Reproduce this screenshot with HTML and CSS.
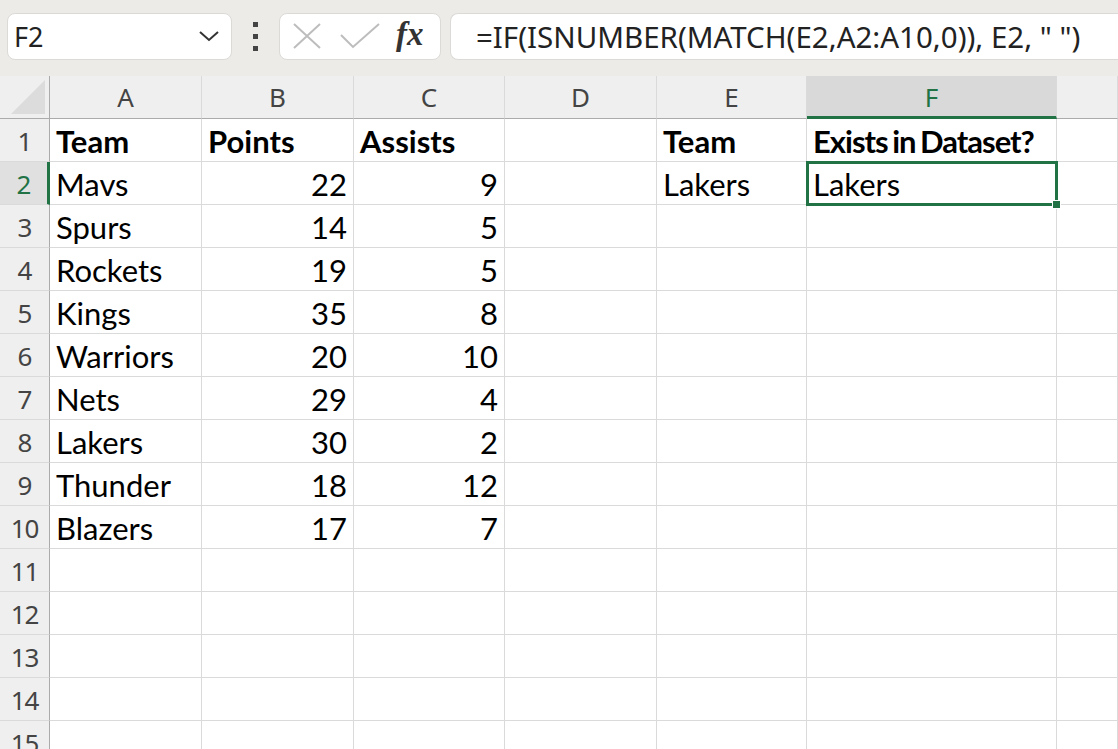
FILE: index.html
```html
<!DOCTYPE html>
<html lang="en">
<head>
    <meta charset="UTF-8">
    <title>Exists in Dataset</title>
    <link rel="stylesheet" href="styles.css">
</head>
<body>

<div class="toolbar">
    <div class="name-box">
        <span class="name-text">F2</span>
        <svg class="chevron" width="22" height="12" viewBox="0 0 22 12"><path d="M2 2 L11 10 L20 2" fill="none" stroke="#333" stroke-width="2"/></svg>
    </div>
    <div class="grip"><span></span><span></span><span></span></div>
    <div class="fx-box">
        <svg width="30" height="26" viewBox="0 0 30 26"><path d="M2 1 L28 25 M28 1 L2 25" stroke="#bdbdbd" stroke-width="2" fill="none"/></svg>
        <svg width="40" height="26" viewBox="0 0 40 26"><path d="M1 12 L13 24 L39 1" stroke="#bdbdbd" stroke-width="2" fill="none"/></svg>
        <span class="fx">fx</span>
    </div>
    <div class="formula-box">=IF(ISNUMBER(MATCH(E2,A2:A10,0)), E2, " ")</div>
</div>

<div class="sheet">
    <div class="corner"><div class="tri"></div></div>
    <div class="colhead">A</div>
    <div class="colhead">B</div>
    <div class="colhead">C</div>
    <div class="colhead">D</div>
    <div class="colhead">E</div>
    <div class="colhead active">F</div>
    <div class="colhead"></div>

    <div class="rowhead">1</div>
    <div class="cell bold">Team</div>
    <div class="cell bold">Points</div>
    <div class="cell bold">Assists</div>
    <div class="cell"></div>
    <div class="cell bold">Team</div>
    <div class="cell bold tight">Exists in Dataset?</div>
    <div class="cell"></div>

    <div class="rowhead active">2</div>
    <div class="cell">Mavs</div>
    <div class="cell num">22</div>
    <div class="cell num">9</div>
    <div class="cell"></div>
    <div class="cell">Lakers</div>
    <div class="cell selected">Lakers<span class="handle"></span></div>
    <div class="cell"></div>

    <div class="rowhead">3</div>
    <div class="cell">Spurs</div>
    <div class="cell num">14</div>
    <div class="cell num">5</div>
    <div class="cell"></div><div class="cell"></div><div class="cell"></div><div class="cell"></div>

    <div class="rowhead">4</div>
    <div class="cell">Rockets</div>
    <div class="cell num">19</div>
    <div class="cell num">5</div>
    <div class="cell"></div><div class="cell"></div><div class="cell"></div><div class="cell"></div>

    <div class="rowhead">5</div>
    <div class="cell">Kings</div>
    <div class="cell num">35</div>
    <div class="cell num">8</div>
    <div class="cell"></div><div class="cell"></div><div class="cell"></div><div class="cell"></div>

    <div class="rowhead">6</div>
    <div class="cell">Warriors</div>
    <div class="cell num">20</div>
    <div class="cell num">10</div>
    <div class="cell"></div><div class="cell"></div><div class="cell"></div><div class="cell"></div>

    <div class="rowhead">7</div>
    <div class="cell">Nets</div>
    <div class="cell num">29</div>
    <div class="cell num">4</div>
    <div class="cell"></div><div class="cell"></div><div class="cell"></div><div class="cell"></div>

    <div class="rowhead">8</div>
    <div class="cell">Lakers</div>
    <div class="cell num">30</div>
    <div class="cell num">2</div>
    <div class="cell"></div><div class="cell"></div><div class="cell"></div><div class="cell"></div>

    <div class="rowhead">9</div>
    <div class="cell">Thunder</div>
    <div class="cell num">18</div>
    <div class="cell num">12</div>
    <div class="cell"></div><div class="cell"></div><div class="cell"></div><div class="cell"></div>

    <div class="rowhead">10</div>
    <div class="cell">Blazers</div>
    <div class="cell num">17</div>
    <div class="cell num">7</div>
    <div class="cell"></div><div class="cell"></div><div class="cell"></div><div class="cell"></div>

    <div class="rowhead">11</div>
    <div class="cell"></div><div class="cell"></div><div class="cell"></div><div class="cell"></div><div class="cell"></div><div class="cell"></div><div class="cell"></div>
    <div class="rowhead">12</div>
    <div class="cell"></div><div class="cell"></div><div class="cell"></div><div class="cell"></div><div class="cell"></div><div class="cell"></div><div class="cell"></div>
    <div class="rowhead">13</div>
    <div class="cell"></div><div class="cell"></div><div class="cell"></div><div class="cell"></div><div class="cell"></div><div class="cell"></div><div class="cell"></div>
    <div class="rowhead">14</div>
    <div class="cell"></div><div class="cell"></div><div class="cell"></div><div class="cell"></div><div class="cell"></div><div class="cell"></div><div class="cell"></div>
    <div class="rowhead">15</div>
    <div class="cell"></div><div class="cell"></div><div class="cell"></div><div class="cell"></div><div class="cell"></div><div class="cell"></div><div class="cell"></div>
</div>

</body>
</html>
```

FILE: styles.css
```css
* {
    box-sizing: border-box;
}

body {
    margin: 0;
    width: 1118px;
    height: 749px;
    overflow: hidden;
    background-color: #fff;
    font-family: "Noto Sans", sans-serif;
}

.toolbar {
    height: 76px;
    background-color: #edebe8;
    display: flex;
    align-items: center;
    padding: 0 0 4px 7px;
}

.name-box {
    width: 225px;
    height: 47px;
    background-color: #fff;
    border: 1px solid #dcdad7;
    border-radius: 8px;
    display: flex;
    align-items: center;
    justify-content: space-between;
    padding: 0 11px 0 6px;
}

.name-text {
    font-size: 27px;
    color: #222;
}

.grip {
    width: 47px;
    display: flex;
    flex-direction: column;
    align-items: center;
    gap: 7px;
}

.grip span {
    width: 5px;
    height: 5px;
    background-color: #444;
}

.fx-box {
    width: 162px;
    height: 47px;
    background-color: #fff;
    border: 1px solid #dcdad7;
    border-radius: 8px;
    display: flex;
    align-items: center;
    gap: 18px;
    padding: 0 0 0 12px;
}

.fx {
    font-family: "Liberation Serif", serif;
    font-style: italic;
    font-weight: bold;
    font-size: 33px;
    color: #333;
    margin-left: -2px;
    margin-top: -4px;
}

.formula-box {
    flex: 1;
    height: 47px;
    margin-left: 9px;
    background-color: #fff;
    border: 1px solid #dcdad7;
    border-right: none;
    border-radius: 8px 0 0 8px;
    display: flex;
    align-items: center;
    padding-left: 25px;
    font-size: 29.5px;
    color: #222;
    white-space: nowrap;
}

.sheet {
    display: grid;
    grid-template-columns: 50px 152px 152px 151px 152px 150px 250px 1fr;
    grid-template-rows: 43px;
    grid-auto-rows: 43px;
}

.corner {
    background-color: #efefef;
    border-right: 1px solid #ababab;
    border-bottom: 1px solid #ababab;
    position: relative;
}

.tri {
    position: absolute;
    right: 4px;
    bottom: 4px;
    width: 0;
    height: 0;
    border-left: 34px solid transparent;
    border-bottom: 34px solid #dcdcdc;
}

.colhead {
    background-color: #efefef;
    border-right: 1px solid #dadada;
    border-bottom: 1px solid #ababab;
    text-align: center;
    font-size: 26px;
    line-height: 42px;
    color: #444;
}

.colhead.active {
    background-color: #d9d9d9;
    color: #217346;
    border-bottom: 3px solid #217346;
}

.rowhead {
    background-color: #efefef;
    border-right: 1px solid #ababab;
    border-bottom: 1px solid #dadada;
    text-align: center;
    font-size: 26px;
    line-height: 44px;
    color: #444;
    letter-spacing: -1px;
}

.rowhead.active {
    background-color: #e0e0e0;
    color: #217346;
    border-right: 3px solid #217346;
}

.cell {
    border-right: 1px solid #dadada;
    border-bottom: 1px solid #dadada;
    font-family: Lato, sans-serif;
    font-size: 31px;
    line-height: 44px;
    padding: 0 6px;
    color: #000;
    white-space: nowrap;
}

.cell.bold {
    font-weight: bold;
}

.cell.tight {
    letter-spacing: -1px;
    word-spacing: -2px;
}

.cell.num {
    text-align: right;
}

.cell.selected {
    position: relative;
    outline: 3px solid #217346;
    outline-offset: -2px;
}

.handle {
    position: absolute;
    right: -5px;
    bottom: -5px;
    width: 9px;
    height: 9px;
    background-color: #217346;
    border: 1px solid #fff;
}
```
